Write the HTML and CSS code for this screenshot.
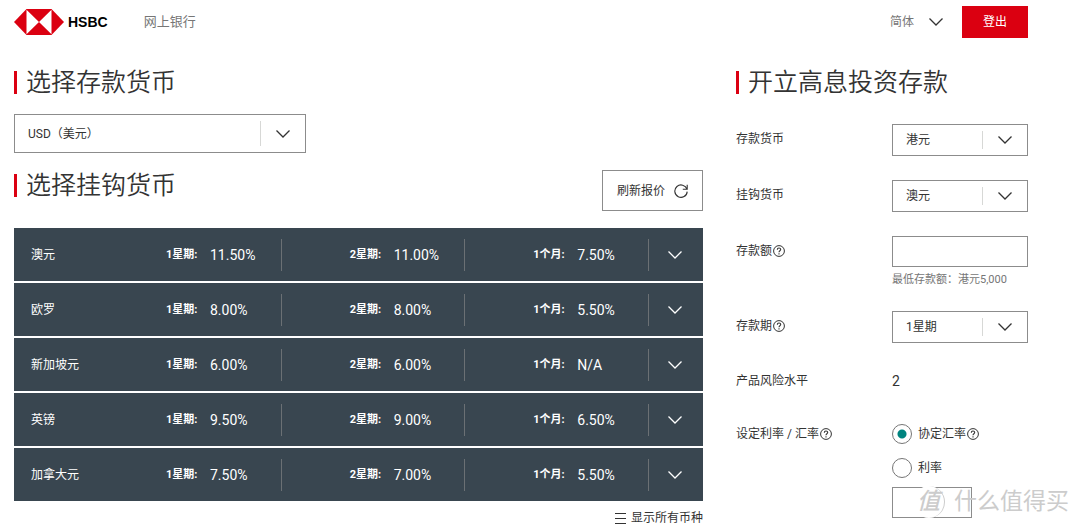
FILE: index.html
```html
<!DOCTYPE html>
<html lang="zh-CN">
<head>
<meta charset="utf-8">
<meta name="viewport" content="width=device-width, initial-scale=1">
<title>HSBC 网上银行</title>
<link rel="stylesheet" href="styles.css">
</head>
<body>
<svg class="defs" aria-hidden="true">
  <symbol id="chevron" viewBox="0 0 16 10"><path d="M1.5 1.5 8 8l6.500-6.500" fill="none" stroke="currentColor" stroke-width="1.300"/></symbol>
  <symbol id="help" viewBox="0 0 12 12"><circle cx="6" cy="6" r="5.400" fill="none" stroke="currentColor" stroke-width="1"/><path d="M4.300 4.800C4.300 2.500 7.700 2.500 7.700 4.600 7.700 5.800 6 5.800 6 7.300M6 8.200v1.200" fill="none" stroke="currentColor" stroke-width="1.100"/></symbol>
</svg>

<header class="topbar">
  <a class="brand" href="#">
    <svg class="brand-mark" viewBox="0 0 50 26" aria-hidden="true">
      <path d="M0 13 12.500 0h25L50 13 37.500 26h-25z" fill="#db0011"/>
      <path d="M12.500 .700 25 13 12.500 25.300zM37.500 .700 25 13l12.500 12.300z" fill="#fff"/>
    </svg>
    <span>HSBC</span>
  </a>
  <span class="site-name">网上银行</span>
  <button class="language" type="button">简体 <svg class="chevron"><use href="#chevron"/></svg></button>
  <button class="logout" type="button">登出</button>
</header>

<main class="page">
  <section class="quotes">
    <h2 class="title" id="deposit-title">选择存款货币</h2>
    <div class="select select-wide">
      <select aria-labelledby="deposit-title"><option>USD（美元）</option></select>
      <span class="select-arrow"><svg class="chevron"><use href="#chevron"/></svg></span>
    </div>

    <div class="linked-head">
      <h2 class="title">选择挂钩货币</h2>
      <button class="refresh" type="button">刷新报价
        <svg class="refresh-icon" viewBox="0 0 14 14" aria-hidden="true"><path d="M12.900 5.200A6.200 6.200 0 1 0 13.200 7.600M13.200.800v4.400H8.800" fill="none" stroke="currentColor" stroke-width="1.100"/></svg>
      </button>
    </div>

    <table class="rates">
      <colgroup><col class="col-name"><col><col><col><col class="col-more"></colgroup>
      <tbody>
        <tr><th scope="row">澳元</th><td><div class="rate"><b>1星期:</b><span>11.50%</span></div></td><td><div class="rate"><b>2星期:</b><span>11.00%</span></div></td><td><div class="rate"><b>1个月:</b><span>7.50%</span></div></td><td><button class="more" type="button" aria-label="展开澳元"><svg class="chevron"><use href="#chevron"/></svg></button></td></tr>
        <tr><th scope="row">欧罗</th><td><div class="rate"><b>1星期:</b><span>8.00%</span></div></td><td><div class="rate"><b>2星期:</b><span>8.00%</span></div></td><td><div class="rate"><b>1个月:</b><span>5.50%</span></div></td><td><button class="more" type="button" aria-label="展开欧罗"><svg class="chevron"><use href="#chevron"/></svg></button></td></tr>
        <tr><th scope="row">新加坡元</th><td><div class="rate"><b>1星期:</b><span>6.00%</span></div></td><td><div class="rate"><b>2星期:</b><span>6.00%</span></div></td><td><div class="rate"><b>1个月:</b><span>N/A</span></div></td><td><button class="more" type="button" aria-label="展开新加坡元"><svg class="chevron"><use href="#chevron"/></svg></button></td></tr>
        <tr><th scope="row">英镑</th><td><div class="rate"><b>1星期:</b><span>9.50%</span></div></td><td><div class="rate"><b>2星期:</b><span>9.00%</span></div></td><td><div class="rate"><b>1个月:</b><span>6.50%</span></div></td><td><button class="more" type="button" aria-label="展开英镑"><svg class="chevron"><use href="#chevron"/></svg></button></td></tr>
        <tr><th scope="row">加拿大元</th><td><div class="rate"><b>1星期:</b><span>7.50%</span></div></td><td><div class="rate"><b>2星期:</b><span>7.00%</span></div></td><td><div class="rate"><b>1个月:</b><span>5.50%</span></div></td><td><button class="more" type="button" aria-label="展开加拿大元"><svg class="chevron"><use href="#chevron"/></svg></button></td></tr>
      </tbody>
    </table>

    <a class="show-all" href="#">
      <svg class="list-icon" viewBox="0 0 11 11" aria-hidden="true"><path d="M0 .500h11M0 5.500h11M0 10.500h11" stroke="currentColor" stroke-width="1"/></svg>显示所有币种</a>
  </section>

  <form class="open-form">
    <h2 class="title">开立高息投资存款</h2>

    <div class="field">
      <label for="currency">存款货币</label>
      <div class="select">
        <select id="currency"><option>港元</option></select>
        <span class="select-arrow"><svg class="chevron"><use href="#chevron"/></svg></span>
      </div>
    </div>
    <div class="field">
      <label for="linked">挂钩货币</label>
      <div class="select">
        <select id="linked"><option>澳元</option></select>
        <span class="select-arrow"><svg class="chevron"><use href="#chevron"/></svg></span>
      </div>
    </div>
    <div class="field">
      <label for="amount">存款额<svg class="help"><use href="#help"/></svg></label>
      <div>
        <input class="box" id="amount" type="text" aria-describedby="minimum">
        <p class="hint" id="minimum">最低存款额：港元5,000</p>
      </div>
    </div>
    <div class="field">
      <label for="tenor">存款期<svg class="help"><use href="#help"/></svg></label>
      <div class="select">
        <select id="tenor"><option>1星期</option></select>
        <span class="select-arrow"><svg class="chevron"><use href="#chevron"/></svg></span>
      </div>
    </div>
    <div class="field field-text">
      <span class="caption">产品风险水平</span>
      <output class="risk">2</output>
    </div>
    <div class="field">
      <span class="caption" id="rate-label">设定利率 / 汇率<svg class="help"><use href="#help"/></svg></span>
      <div class="choices" role="radiogroup" aria-labelledby="rate-label">
        <label class="choice"><input type="radio" name="basis" checked>协定汇率<svg class="help"><use href="#help"/></svg></label>
        <label class="choice"><input type="radio" name="basis">利率</label>
        <input class="box box-short" type="text" aria-label="利率">
      </div>
    </div>
  </form>
</main>

<div class="watermark"><span class="watermark-badge">值</span>什么值得买</div>
</body>
</html>
```
FILE: styles.css
```css
* { box-sizing: border-box; }

body {
  position: relative;
  margin: 0;
  background: #fff;
  color: #333;
  font: 12px/20px Roboto, "Noto Sans CJK SC", sans-serif;
}

button, input, select {
  margin: 0;
  border-radius: 0;
  color: inherit;
  font: inherit;
}

a { color: inherit; text-decoration: none; }

.defs { position: absolute; width: 0; height: 0; }
.chevron { display: block; width: 16px; height: 10px; }

.topbar {
  display: flex;
  align-items: center;
  height: 44px;
  padding: 0 52px 0 14px;
}
.brand {
  display: flex;
  align-items: center;
  gap: 4px;
  color: #000;
  font: bold 14px/20px "Liberation Sans", sans-serif;
}
.brand-mark { display: block; width: 50px; height: 26px; }
.site-name { margin-left: 36px; color: #767676; font-size: 13px; }
.language {
  display: flex;
  align-items: center;
  gap: 14px;
  margin-left: auto;
  padding: 0;
  border: 0;
  background: none;
  color: #767676;
}
.language .chevron { color: #333; }
.logout {
  width: 66px;
  height: 32px;
  margin-left: 18px;
  border: 0;
  background: #db0011;
  color: #fff;
}

.page {
  display: flex;
  gap: 33px;
  padding: 27px 52px 0 14px;
}
.quotes { flex: 1; min-width: 0; }
.open-form { flex: 0 0 292px; }

.title {
  margin: 0;
  padding-left: 9px;
  border-left: 3px solid #db0011;
  font-size: 25px;
  font-weight: 350;
  line-height: 23px;
}

.select { position: relative; }
.select select {
  display: block;
  width: 100%;
  height: 32px;
  padding: 0 46px 0 13px;
  border: 1px solid #8c8c8c;
  appearance: none;
  background: #fff;
}
.select-arrow {
  position: absolute;
  top: 7px;
  right: 1px;
  bottom: 7px;
  display: grid;
  place-items: center;
  width: 45px;
  border-left: 1px solid #d7d8d6;
  pointer-events: none;
}
.select-wide { width: 292px; margin-top: 20px; }
.select-wide select { height: 39px; }

.linked-head {
  display: flex;
  align-items: center;
  justify-content: space-between;
  margin-top: 17px;
}
.linked-head .title { margin-bottom: 10px; }
.refresh {
  display: flex;
  align-items: center;
  gap: 9px;
  height: 41px;
  padding: 0 14px;
  border: 1px solid #8c8c8c;
  background: #fff;
}
.refresh-icon { width: 14px; height: 14px; }

.rates {
  width: 100%;
  margin-top: 15px;
  border-spacing: 0 2px;
  table-layout: fixed;
  color: #fff;
}
.rates tr { height: 53px; background: #394650; }
.rates th, .rates td { padding: 0; }
.rates th { padding-left: 17px; font-weight: 400; text-align: left; }
.col-name { width: 84px; }
.col-more { width: 54px; }
.rate {
  display: flex;
  align-items: center;
  gap: 12px;
  height: 32px;
  padding-left: 68px;
  border-right: 1px solid #6b7074;
}
.rate b { width: 32px; font-size: 11px; white-space: nowrap; }
.rate span { font-size: 14px; }
.more {
  display: grid;
  place-items: center;
  width: 100%;
  height: 32px;
  padding: 0 2px 0 0;
  border: 0;
  background: none;
}

.show-all {
  display: flex;
  align-items: center;
  justify-content: flex-end;
  gap: 5px;
  margin-top: 5px;
}
.list-icon { width: 11px; height: 11px; }

.field {
  display: grid;
  grid-template-columns: 156px 1fr;
  margin-top: 24px;
}
.title + .field { margin-top: 30px; }
.field > label, .caption {
  display: flex;
  align-items: center;
  height: 30px;
}
.field-text .caption { height: 28px; }
.help { width: 12px; height: 12px; margin-left: 1px; }
.box {
  display: block;
  width: 100%;
  height: 31px;
  padding: 0 13px;
  border: 1px solid #8c8c8c;
  background: #fff;
}
.box-short { width: 80px; }
.hint { margin: 6px 0 0; color: #767676; font-size: 11px; line-height: 14px; }
.risk { align-self: center; font-size: 14px; }

.choices { display: grid; gap: 4px; }
.choice { display: flex; align-items: center; height: 30px; }
.choice input {
  width: 20px;
  height: 20px;
  margin-right: 6px;
  border: 1px solid #767676;
  border-radius: 50%;
  appearance: none;
}
.choice input:checked { background: radial-gradient(circle, #00847f 4px, #fff 5px); }

.watermark {
  position: absolute;
  right: 11px;
  bottom: 10px;
  display: flex;
  align-items: center;
  gap: 9px;
  color: #ccc;
  font-size: 23px;
  line-height: 32px;
}
.watermark-badge {
  width: 32px;
  height: 32px;
  border-right: 1px solid #ccc;
  border-radius: 50%;
  background: #fff;
  font-style: italic;
  font-weight: 500;
  text-align: center;
}
```
